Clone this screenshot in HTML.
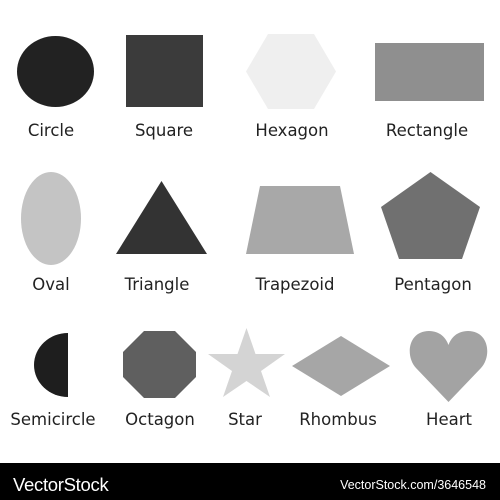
<!DOCTYPE html>
<html><head><style>
body{margin:0;width:500px;height:500px;background:#fff;position:relative;overflow:hidden;font-family:"DejaVu Sans","Liberation Sans",sans-serif}
.l{position:absolute;font-size:16.5px;color:#222;transform:translateX(-50%);white-space:nowrap;line-height:1}
.f{position:absolute;left:0;top:463px;width:500px;height:37px;background:#000}
</style></head><body>
<svg width="500" height="500" style="position:absolute;left:0;top:0">
<ellipse cx="55.5" cy="71.5" rx="38.5" ry="35.5" fill="#222"/>
<rect x="126" y="35" width="77" height="72" fill="#3b3b3b"/>
<polygon points="246,71.5 268,34 314,34 336,71.5 314,109 268,109" fill="#efefef"/>
<rect x="375" y="43" width="109" height="58" fill="#8f8f8f"/>
<ellipse cx="51" cy="218.5" rx="30" ry="46.5" fill="#c4c4c4"/>
<polygon points="161.5,181 207,254 116,254" fill="#333"/>
<polygon points="260,186 340,186 354,254 246,254" fill="#a8a8a8"/>
<polygon points="430.5,172 480,207 462,259 399,259 381,207" fill="#707070"/>
<path d="M68,333 A34,32 0 0 0 68,397 Z" fill="#1e1e1e"/>
<polygon points="144,331 175,331 196,352 196,377 175,398 144,398 123,377 123,352" fill="#5f5f5f"/>
<polygon points="246.5,328 255.5,354 285,354 261,371 270,397 246.5,381 223,397 232,371 208,354 237.5,354" fill="#d4d4d4"/>
<polygon points="341,336 390,366 341,396 292,366" fill="#a6a6a6"/>
<path d="M448.5,402 L416,368 C405,356 408,331 429,331 C440,331 446,338 448.5,345 C451,338 457,331 468,331 C489,331 492,356 481,368 Z" fill="#a3a3a3"/>
</svg>
<div class="l" style="left:51px;top:123px">Circle</div>
<div class="l" style="left:164px;top:123px">Square</div>
<div class="l" style="left:292px;top:123px">Hexagon</div>
<div class="l" style="left:427px;top:123px">Rectangle</div>
<div class="l" style="left:51px;top:277px">Oval</div>
<div class="l" style="left:157px;top:277px">Triangle</div>
<div class="l" style="left:295px;top:277px">Trapezoid</div>
<div class="l" style="left:433px;top:277px">Pentagon</div>
<div class="l" style="left:53px;top:412px">Semicircle</div>
<div class="l" style="left:160px;top:412px">Octagon</div>
<div class="l" style="left:245px;top:412px">Star</div>
<div class="l" style="left:338px;top:412px">Rhombus</div>
<div class="l" style="left:449px;top:412px">Heart</div>
<div class="f">
<div style="position:absolute;left:13px;top:11px;color:#fff;font-family:'Liberation Sans',sans-serif;font-size:18.5px;letter-spacing:-0.3px">VectorStock</div>
<div style="position:absolute;right:14px;top:15px;color:#fff;font-family:'Liberation Sans',sans-serif;font-size:12.5px">VectorStock.com/3646548</div>
</div>
</body></html>
